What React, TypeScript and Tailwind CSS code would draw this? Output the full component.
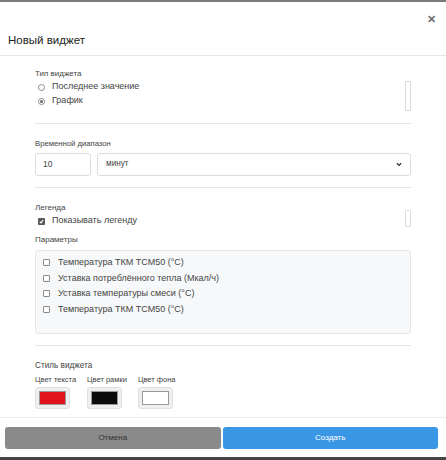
const font = { fontFamily: '"Liberation Sans", Arial, sans-serif' };

const Radio = ({ checked }: { checked?: boolean }) => (
  <span className="w-[7px] h-[7px] rounded-full border border-[#8a8a8a] bg-white flex items-center justify-center shrink-0">
    {checked && <span className="w-[3px] h-[3px] rounded-full bg-[#666]" />}
  </span>
);

const Check = ({ checked }: { checked?: boolean }) =>
  checked ? (
    <span className="w-[7px] h-[7px] rounded-[1px] bg-[#5a5a5a] flex items-center justify-center shrink-0">
      <svg width="5" height="5" viewBox="0 0 6 6">
        <path d="M1 3.2 L2.4 4.6 L5 1.4" stroke="#fff" strokeWidth="1.3" fill="none" />
      </svg>
    </span>
  ) : (
    <span className="w-[7px] h-[7px] rounded-[1px] border border-[#8a8a8a] bg-white shrink-0" />
  );

const ScrollStub = ({ h }: { h: string }) => (
  <div className={`absolute right-0 w-[6px] border border-[#dcdcdc] rounded-[1px] bg-white ${h}`} />
);

const params = [
  'Температура ТКМ ТСМ50 (°С)',
  'Уставка потреблённого тепла (Мкал/ч)',
  'Уставка температуры смеси (°С)',
  'Температура ТКМ ТСМ50 (°С)',
];

const Swatch = ({ label, color }: { label: string; color: string }) => (
  <div className="flex flex-col items-start">
    <span className="text-[7.5px] text-[#444] leading-[12px] h-[13px]">{label}</span>
    <div className="w-[35px] h-[22px] bg-[#efefef] border border-[#e0e0e0] rounded-[3px] flex items-center justify-center">
      <div className={`w-[27px] h-[14px] border border-[#999] ${color}`} />
    </div>
  </div>
);

export default function App() {
  return (
    <div className="w-[446px] h-[460px] bg-white flex flex-col overflow-hidden text-[#333]" style={font}>
      <div className="h-[2px] bg-[#7a7a7a]" />

      {/* Header */}
      <div className="h-[54px] relative border-b border-[#e6e6e6]">
        <span className="absolute right-[10px] top-[12px] text-[11px] font-bold text-[#6f6f6f] leading-none">✕</span>
        <h2 className="absolute left-[8px] top-[31px] text-[11.5px] text-[#222] leading-[14px]">Новый виджет</h2>
      </div>

      {/* Body */}
      <div className="flex-1 px-[35px] pt-[12px]">
        <div className="relative">
          <div className="text-[8px] text-[#444] leading-[12px]">Тип виджета</div>
          <div className="flex items-center gap-[7px] h-[14px] pl-[3px] text-[9px] text-[#444]">
            <Radio />
            <span>Последнее значение</span>
          </div>
          <div className="flex items-center gap-[7px] h-[14px] pl-[3px] text-[9px] text-[#444]">
            <Radio checked />
            <span>График</span>
          </div>
          <div className="h-[15px]" />
          <ScrollStub h="top-[13px] h-[30px]" />
        </div>

        <div className="border-t border-[#e6e6e6]" />

        <div className="pt-[14px]">
          <div className="text-[7.7px] text-[#444] leading-[12px]">Временной диапазон</div>
          <div className="flex gap-[6px] mt-[3px]">
            <div className="w-[56px] h-[23px] border border-[#dcdcdc] rounded-[3px] flex items-center px-[7px] text-[8.5px] text-[#444]">10</div>
            <div className="flex-1 h-[23px] border border-[#dcdcdc] rounded-[3px] flex items-center justify-between px-[8px] text-[8.2px] text-[#444]">
              <span>минут</span>
              <svg width="6" height="5" viewBox="0 0 7 5">
                <path d="M1 1 L3.5 3.5 L6 1" stroke="#333" strokeWidth="1.5" fill="none" />
              </svg>
            </div>
          </div>
        </div>

        <div className="border-t border-[#e6e6e6] mt-[11px]" />

        <div className="relative pt-[14px]">
          <div className="text-[8px] text-[#444] leading-[12px]">Легенда</div>
          <div className="flex items-center gap-[7px] h-[14px] pl-[3px] text-[9px] text-[#444]">
            <Check checked />
            <span>Показывать легенду</span>
          </div>
          <ScrollStub h="top-[22px] h-[17px]" />
          <div className="text-[8px] text-[#444] leading-[12px] mt-[6px]">Параметры</div>
          <div className="mt-[4px] h-[84px] bg-[#f7f8f9] border border-[#e4e6e8] rounded-[3px] pt-[4px] pl-[7px]">
            {params.map((p, i) => (
              <div key={i} className="flex items-center gap-[8px] h-[15.5px] text-[9px] text-[#444]">
                <Check />
                <span>{p}</span>
              </div>
            ))}
          </div>
        </div>

        <div className="border-t border-[#e6e6e6] mt-[11px]" />

        <div className="pt-[14px]">
          <div className="text-[8.2px] text-[#444] leading-[12px]">Стиль виджета</div>
          <div className="flex gap-[11px] mt-[2px]">
            <Swatch label="Цвет текста" color="bg-[#e0141a]" />
            <Swatch label="Цвет рамки" color="bg-[#0b0b0b]" />
            <Swatch label="Цвет фона" color="bg-white" />
          </div>
        </div>
      </div>

      {/* Footer */}
      <div className="border-t border-[#ececec] h-[40px] flex items-start gap-[2px] pl-[5px] pr-[8px] pt-[9px]">
        <button className="flex-1 h-[22px] bg-[#8a8a8a] rounded-[3px] text-[8px] text-[#333]">Отмена</button>
        <button className="flex-1 h-[22px] bg-[#3a97e6] rounded-[3px] text-[8px] text-white">Создать</button>
      </div>
      <div className="h-[3px] bg-[#444]" />
    </div>
  );
}
